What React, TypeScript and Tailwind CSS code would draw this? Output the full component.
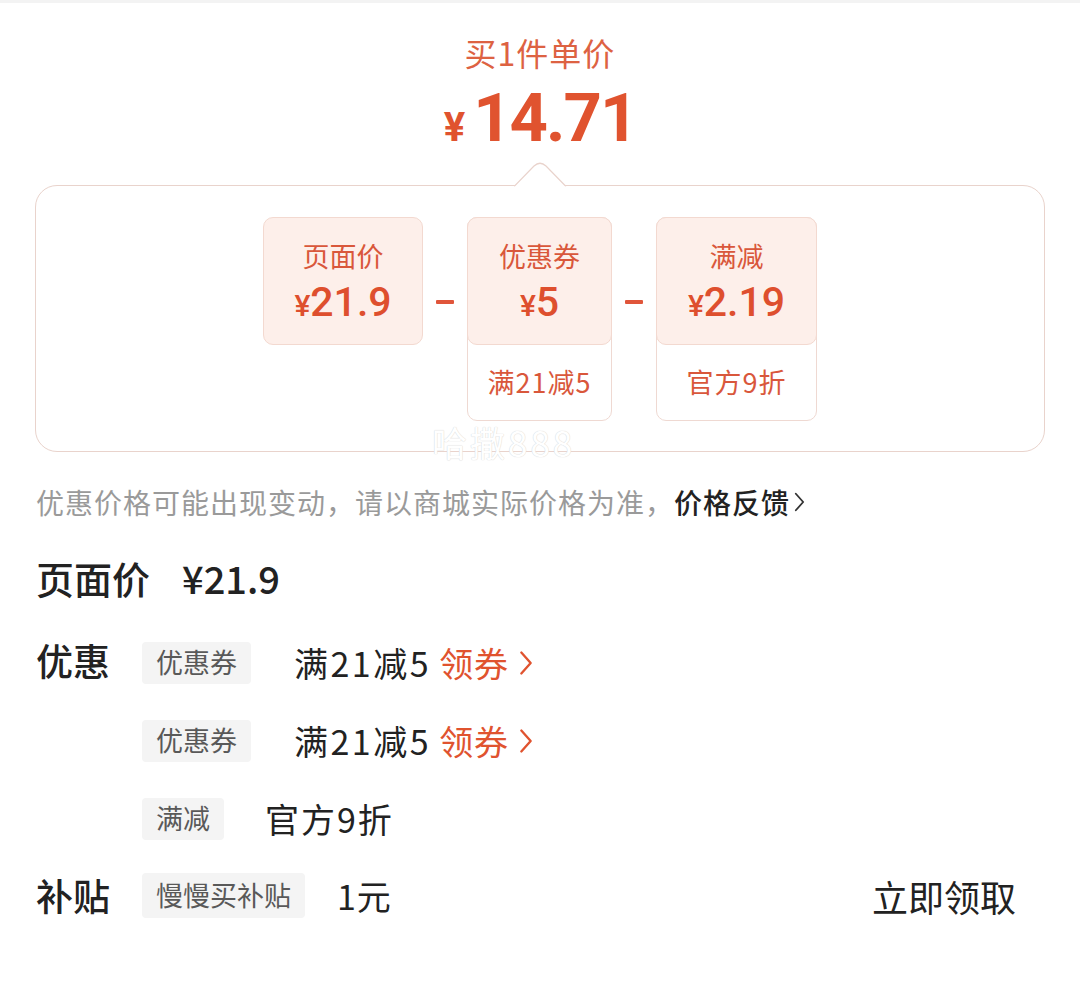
import React from "react";

const ORANGE = "text-[#e0532f]";

const Chevron = ({ className }: { className?: string }) => (
  <svg viewBox="0 0 12 24" className={className} fill="none" stroke="currentColor" strokeWidth={2} strokeLinecap="round" strokeLinejoin="round">
    <polyline points="2,3 10,12 2,21" />
  </svg>
);

const Minus = () => <div className="h-[4px] w-[18px] rounded-[1px] bg-[#e0553a]" />;

interface PartProps {
  label: string;
  price: string;
  note?: string;
  width: string;
}

const PricePart = ({ label, price, note, width }: PartProps) => {
  const top = (
    <div className="flex h-[128px] flex-col items-center rounded-[10px] border border-[#f3d9d0] bg-[#fdefea] pt-[20px]">
      <div className="text-[27px] leading-[36px] text-[#d9573b]">{label}</div>
      <div
        className="mt-[2px] flex items-baseline font-medium leading-[52px] text-[#de4f2e]"
        style={{ fontFamily: "Roboto, sans-serif" }}
      >
        <span className="text-[30px]">¥</span>
        <span className="text-[41px]">{price}</span>
      </div>
    </div>
  );
  if (!note) return <div className={`self-start ${width}`}>{top}</div>;
  return (
    <div className={`self-start ${width} rounded-[10px] border border-[#efd9d2]`}>
      <div className="-m-px">{top}</div>
      <div className="flex h-[76px] items-center justify-center text-[27px] tracking-[1px] text-[#d9573b]">{note}</div>
    </div>
  );
};

const Tag = ({ children }: { children: React.ReactNode }) => (
  <span className="flex h-[42px] items-center rounded-[4px] bg-[#f4f4f4] px-[14px] text-[27px] text-[#595959]">{children}</span>
);

const CouponRow = () => (
  <div className="flex h-[51px] items-center">
    <Tag>优惠券</Tag>
    <span className="ml-[43px] text-[34px] tracking-[2.5px] text-[#222]">满21减5</span>
    <span className={`ml-[8px] text-[34px] tracking-[1px] ${ORANGE}`}>领券</span>
    <Chevron className={`ml-[10px] h-[28px] w-[14px] ${ORANGE}`} />
  </div>
);

export default function App() {
  return (
    <div
      className="min-h-[981px] w-[1080px] border-t-[3px] border-[#f3f3f3] bg-white"
      style={{ fontFamily: '"Noto Sans CJK SC", "Noto Sans", sans-serif' }}
    >
      <div className="flex flex-col items-center pt-[29px]">
        <div className="text-[32px] leading-[40px] tracking-[1px] text-[#dd6242]">买1件单价</div>
        <div className={`mt-[-4px] flex h-[76px] items-baseline font-bold ${ORANGE}`}>
          <span className="mr-[8px] text-[40px]" style={{ fontFamily: "Roboto, sans-serif" }}>¥</span>
          <span className="text-[67px] tracking-[-2px]" style={{ fontFamily: "Roboto, sans-serif" }}>14.71</span>
        </div>
      </div>

      <div className="relative mx-[35px] mt-[41px] h-[267px] rounded-[22px] border border-[#e9d3cc]">
        <svg className="absolute left-[478px] top-[-24px]" width="56" height="26" viewBox="0 0 56 26">
          <path d="M0 24.5 L20 4 Q26 -1.5 32 4 L52 24.5" fill="white" stroke="#e9d3cc" strokeWidth="1.2" />
          <rect x="0" y="24.5" width="56" height="2" fill="white" />
        </svg>
        <div className="flex items-start justify-center pt-[31px]">
          <PricePart label="页面价" price="21.9" width="w-[160px]" />
          <div className="mx-[13px] mt-[83px]"><Minus /></div>
          <PricePart label="优惠券" price="5" note="满21减5" width="w-[145px]" />
          <div className="mx-[13px] mt-[83px]"><Minus /></div>
          <PricePart label="满减" price="2.19" note="官方9折" width="w-[161px]" />
        </div>
        <div
          className="absolute left-[396px] top-[230px] text-[35px] tracking-[3px] text-white"
          style={{ textShadow: "0 0 1px #d4d4d4, 0 0 1px #e0e0e0" }}
        >
          哈撒888
        </div>
      </div>

      <div className="px-[36px]">
        <div className="mt-[30px] flex items-center text-[28px] leading-[40px] tracking-[1px] text-[#9a9a9a]">
          优惠价格可能出现变动，请以商城实际价格为准，
          <span className="font-medium text-[#222]">价格反馈</span>
          <Chevron className="ml-[4px] h-[22px] w-[11px] text-[#333]" />
        </div>

        <div className="mt-[33px] flex h-[44px] items-center text-[38px] font-medium text-[#222]">
          <span>页面价</span>
          <span className="ml-[32px]">¥21.9</span>
        </div>

        <div className="mt-[38px] flex">
          <div className="w-[106px] text-[37px] font-medium leading-[46px] text-[#222]">优惠</div>
          <div className="flex flex-col gap-[27px]">
            <CouponRow />
            <CouponRow />
            <div className="flex h-[51px] items-center">
              <Tag>满减</Tag>
              <span className="ml-[41px] text-[34px] tracking-[2px] text-[#222]">官方9折</span>
            </div>
          </div>
        </div>

        <div className="mt-[24px] flex h-[55px] items-center">
          <div className="w-[106px] text-[37px] font-medium text-[#222]">补贴</div>
          <span className="flex h-[45px] items-center rounded-[4px] bg-[#f4f4f4] px-[14px] text-[27px] text-[#595959]">慢慢买补贴</span>
          <span className="ml-[32px] text-[34px] tracking-[1px] text-[#222]">1元</span>
          <span className="ml-auto mr-[28px] text-[36px] text-[#222]">立即领取</span>
        </div>
      </div>
    </div>
  );
}
